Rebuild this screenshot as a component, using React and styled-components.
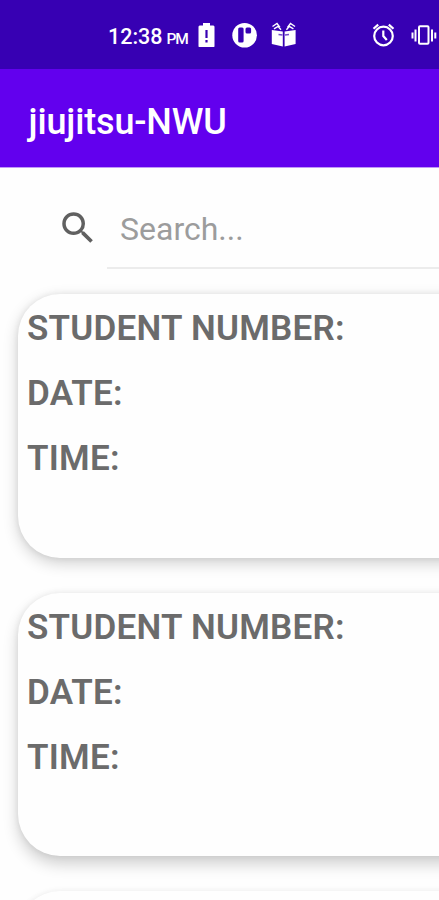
import React from "react";
import styled, { createGlobalStyle } from "styled-components";

const GlobalStyle = createGlobalStyle`
  * {
    box-sizing: border-box;
  }

  body {
    margin: 0;
    background-color: #fefefe;
    font-family: Roboto, sans-serif;
  }
`;

const Screen = styled.div`
  height: 900px;
  overflow: hidden;
  background-color: #fefefe;
`;

const StatusBar = styled.div`
  height: 69px;
  padding: 0 0 0 108px;
  display: flex;
  align-items: center;
  background-color: #3700b3;
  color: #fff;
`;

const Clock = styled.div`
  width: 91px;
  font-size: 21.5px;
  font-weight: 500;
  line-height: 25px;
  padding-top: 6px;
  white-space: nowrap;
`;

const Meridiem = styled.span`
  margin-left: 4px;
  font-size: 15.5px;
  letter-spacing: -1.1px;
`;

const StatusIcon = styled.svg`
  flex: none;
  display: block;
  width: ${({ $width }) => $width}px;
  height: 26px;
  margin: 1px ${({ $gap }) => $gap || 0}px 0 0;
`;

const Toolbar = styled.header`
  height: 98px;
  padding: 7px 28.5px 0;
  display: flex;
  align-items: center;
  background-color: #6200ee;
  box-shadow: 0 1px 0 rgba(98, 0, 238, 0.4);
`;

const Title = styled.h1`
  margin: 0;
  color: #fff;
  font-size: 36px;
  font-weight: 500;
  line-height: 42px;
  letter-spacing: -0.15px;
`;

const SearchBar = styled.div`
  height: 102px;
  padding: 20px 0 0 57px;
  display: flex;
`;

const SearchIcon = styled.svg`
  flex: none;
  display: block;
  width: 42px;
  height: 42px;
  margin: 20px 8px 0 0;
  fill: #606060;
`;

const SearchInput = styled.input`
  flex: 1;
  min-width: 0;
  height: 82px;
  padding: 3px 0 0 13px;
  border: none;
  border-bottom: 2px solid #ececec;
  outline: none;
  background: transparent;
  font-family: inherit;
  font-size: 32px;

  &::placeholder {
    color: #9c9c9c;
    opacity: 1;
  }
`;

const List = styled.main`
  padding: 25px 0 0 18px;
  display: flex;
  flex-direction: column;
  gap: 35px;
`;

const Card = styled.article`
  flex: none;
  height: 263.5px;
  margin-right: -80px;
  padding: 2px 9px;
  border-radius: 42px;
  background-color: #fefefe;
  box-shadow:
    0 ${({ $drop }) => $drop}px 15px rgba(0, 0, 0, 0.19),
    0 0 6px rgba(0, 0, 0, 0.07);
`;

const Field = styled.p`
  margin: 0;
  height: 65px;
  color: #6b6b6b;
  font-size: 35px;
  font-weight: 600;
  line-height: 65px;
  letter-spacing: 0.24px;
  white-space: nowrap;
`;

const fields = ["STUDENT NUMBER:", "DATE:", "TIME:"];

// the shadow drops further the lower a card sits on the screen
const records = [
  { id: 1, drop: 5, fields },
  { id: 2, drop: 8, fields },
  { id: 3, drop: 12, fields: [] },
];

const BatteryIcon = () => (
  <StatusIcon $width={17} $gap={17} viewBox="-0.500 0 17 26">
    <path
      fill="#fff"
      fillRule="evenodd"
      d="M4.500 1h7v2.500H15L16 4.500V24.500l-.5.500H.5l-.5-.500V4.500L1 3.500h3.500V1zM6.900 8v8h2.200V8H6.900zm0 10v2.400h2.200V18H6.900z"
    />
  </StatusIcon>
);

const BadgeIcon = () => (
  <StatusIcon $width={25} $gap={14} viewBox="0 0 25 26">
    <circle cx="12.600" cy="13.300" r="12.300" fill="#fff" />
    <rect x="6.200" y="5.500" width="5.400" height="15" rx="1.500" fill="#3700b3" />
    <rect x="13.500" y="5.500" width="5.600" height="6" rx="1.500" fill="#3700b3" />
  </StatusIcon>
);

const GiftIcon = () => (
  <StatusIcon $width={25} $gap={76} viewBox="0 0 25 26">
    <path
      fill="#fff"
      d="M.8 8L11.800 9.500v15L.8 22zM24.600 8L13.600 9.500v15L24.600 22z"
    />
    <path
      fill="none"
      stroke="#fff"
      strokeWidth="1.400"
      d="M1.500 4.500L6 1.500l3 4M24 4.500L19.500 1.500l-3 4M3 6.800l4-2.500 3 3.500M22.400 6.800l-4-2.500-3 3.500"
    />
    <path stroke="#3700b3" strokeWidth="1.300" d="M7.500 12.500l4 .5M18 12.500l-4 .5" opacity="0.7" />
  </StatusIcon>
);

const AlarmIcon = () => (
  <StatusIcon $width={24} $gap={15} viewBox="0 0 24 26">
    <g fill="none" stroke="#fff" strokeWidth="2.200">
      <circle cx="11.500" cy="14" r="9.300" />
      <path d="M11.300 8.500v5.500l3.500 4M1.500 6.800l4.700-4.200M21.500 6.800l-4.700-4.200" />
    </g>
  </StatusIcon>
);

const VibrateIcon = () => (
  <StatusIcon $width={28} viewBox="0 0 28 26">
    <g fill="none" stroke="#fff" strokeWidth="2">
      <rect x="8" y="4.300" width="9.500" height="17.500" rx="1" />
      <path d="M4.500 7.500v12M21 7.500v12M1.500 10.500v6M24.300 10.500v6" />
    </g>
  </StatusIcon>
);

const App = () => (
  <Screen>
    <GlobalStyle />
    <StatusBar>
      <Clock>
        12:38
        <Meridiem>PM</Meridiem>
      </Clock>
      <BatteryIcon />
      <BadgeIcon />
      <GiftIcon />
      <AlarmIcon />
      <VibrateIcon />
    </StatusBar>
    <Toolbar>
      <Title>jiujitsu-NWU</Title>
    </Toolbar>
    <SearchBar>
      <SearchIcon viewBox="0 0 24 24">
        <path d="M15.500 14h-.79l-.28-.27A6.471 6.471 0 0 0 16 9.500 6.500 6.500 0 1 0 9.500 16c1.610 0 3.090-.59 4.230-1.570l.27.28v.79l5 4.990L20.490 19l-4.990-5zm-6 0C7.010 14 5 11.990 5 9.500S7.010 5 9.500 5 14 7.010 14 9.500 11.990 14 9.500 14z" />
      </SearchIcon>
      <SearchInput placeholder="Search..." />
    </SearchBar>
    <List>
      {records.map((record) => (
        <Card key={record.id} $drop={record.drop}>
          {record.fields.map((field) => (
            <Field key={field}>{field}</Field>
          ))}
        </Card>
      ))}
    </List>
  </Screen>
);

export default App;
